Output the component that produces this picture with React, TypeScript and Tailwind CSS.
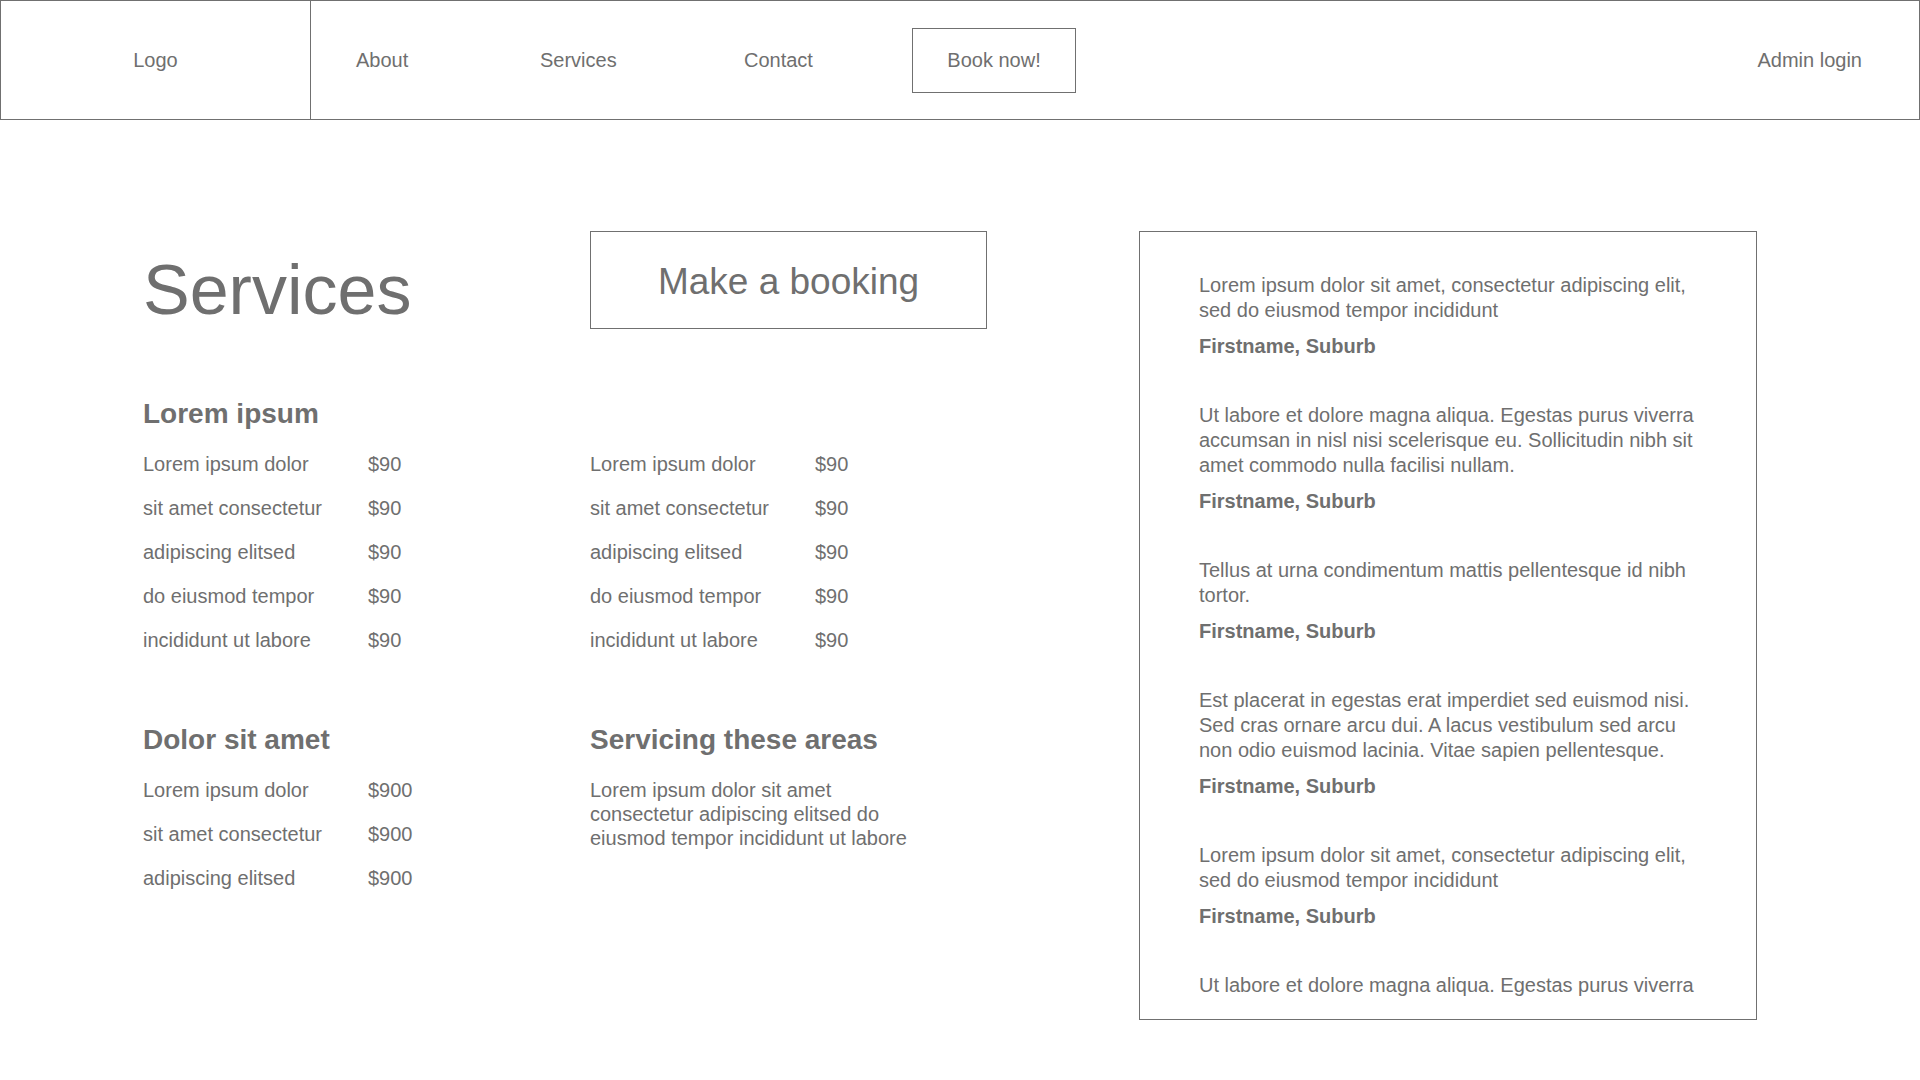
import React from 'react';

// Datos de la página
const navLinks = [
    { label: 'About', width: 'w-[184px]' },
    { label: 'Services', width: 'w-[204px]' },
    { label: 'Contact', width: 'w-[168px]' },
];

const mainServices = [
    { name: 'Lorem ipsum dolor', price: '$90' },
    { name: 'sit amet consectetur', price: '$90' },
    { name: 'adipiscing elitsed', price: '$90' },
    { name: 'do eiusmod tempor', price: '$90' },
    { name: 'incididunt ut labore', price: '$90' },
];

const extraServices = [
    { name: 'Lorem ipsum dolor', price: '$900' },
    { name: 'sit amet consectetur', price: '$900' },
    { name: 'adipiscing elitsed', price: '$900' },
];

const testimonials = [
    { text: 'Lorem ipsum dolor sit amet, consectetur adipiscing elit, sed do eiusmod tempor incididunt', author: 'Firstname, Suburb' },
    { text: 'Ut labore et dolore magna aliqua. Egestas purus viverra accumsan in nisl nisi scelerisque eu. Sollicitudin nibh sit amet commodo nulla facilisi nullam.', author: 'Firstname, Suburb' },
    { text: 'Tellus at urna condimentum mattis pellentesque id nibh tortor.', author: 'Firstname, Suburb' },
    { text: 'Est placerat in egestas erat imperdiet sed euismod nisi. Sed cras ornare arcu dui. A lacus vestibulum sed arcu non odio euismod lacinia. Vitae sapien pellentesque.', author: 'Firstname, Suburb' },
    { text: 'Lorem ipsum dolor sit amet, consectetur adipiscing elit, sed do eiusmod tempor incididunt', author: 'Firstname, Suburb' },
];

type Item = { name: string; price: string };

const PriceList: React.FC<{ items: Item[] }> = ({ items }) => (
    <div className="flex flex-col">
        {items.map((item, i) => (
            <div key={i} className="flex h-[44px] items-center text-[20px]">
                <span className="w-[225px]">{item.name}</span>
                <span>{item.price}</span>
            </div>
        ))}
    </div>
);

const App: React.FC = () => {
    return (
        <div className="min-h-screen bg-white text-[#6f6f6f] font-['Liberation_Sans',Arial,sans-serif]">
            {/* Cabecera */}
            <header className="flex h-[120px] border border-[#707070] text-[20px]">
                <div className="flex w-[310px] items-center justify-center border-r border-[#707070]">
                    Logo
                </div>
                <nav className="flex flex-1 items-center pl-[45px]">
                    {navLinks.map(link => (
                        <a key={link.label} className={link.width}>{link.label}</a>
                    ))}
                    <a className="flex h-[65px] w-[164px] items-center justify-center border border-[#707070]">
                        Book now!
                    </a>
                    <a className="ml-auto mr-[57px]">Admin login</a>
                </nav>
            </header>

            <main className="flex items-start pt-[111px] pl-[143px]">
                {/* Servicios */}
                <div className="grid w-[996px] grid-cols-[447px_1fr]">
                    <h1 className="mt-[24px] text-[70px] leading-none">Services</h1>
                    <div className="flex h-[98px] w-[397px] items-center justify-center border border-[#707070] pt-[3px] text-[37px]">
                        Make a booking
                    </div>

                    <h2 className="col-span-2 mt-[71px] mb-[14px] text-[28px] font-bold leading-none">Lorem ipsum</h2>
                    <PriceList items={mainServices} />
                    <PriceList items={mainServices} />

                    <h2 className="mt-[64px] mb-[14px] text-[28px] font-bold leading-none">Dolor sit amet</h2>
                    <h2 className="mt-[64px] mb-[14px] text-[28px] font-bold leading-none">Servicing these areas</h2>
                    <PriceList items={extraServices} />
                    <p className="mt-[10px] w-[340px] text-[20px] leading-[24px]">
                        Lorem ipsum dolor sit amet consectetur adipiscing elitsed do eiusmod tempor incididunt ut labore
                    </p>
                </div>

                {/* Testimonios */}
                <aside className="h-[789px] w-[618px] overflow-hidden border border-[#707070] px-[59px] pt-[41px]">
                    <div className="flex flex-col gap-[44px]">
                        {testimonials.map((t, i) => (
                            <div key={i}>
                                <p className="text-[20px] leading-[25px]">{t.text}</p>
                                <p className="mt-[11px] text-[20px] font-bold leading-[25px]">{t.author}</p>
                            </div>
                        ))}
                        <p className="text-[20px] leading-[25px]">Ut labore et dolore magna aliqua. Egestas purus viverra</p>
                    </div>
                </aside>
            </main>
        </div>
    );
};

export default App;
